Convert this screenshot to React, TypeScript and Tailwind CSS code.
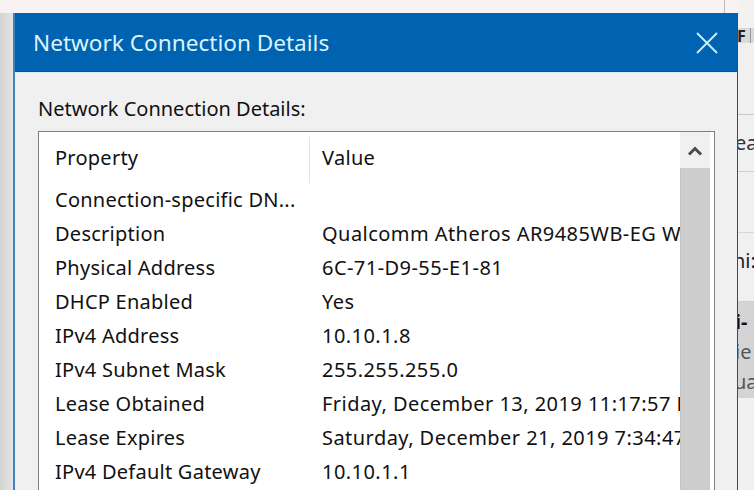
import React from "react";

const rows: [string, string][] = [
  ["Connection-specific DN...", ""],
  ["Description", "Qualcomm Atheros AR9485WB-EG Wireless Network Adapter"],
  ["Physical Address", "6C-71-D9-55-E1-81"],
  ["DHCP Enabled", "Yes"],
  ["IPv4 Address", "10.10.1.8"],
  ["IPv4 Subnet Mask", "255.255.255.0"],
  ["Lease Obtained", "Friday, December 13, 2019 11:17:57 PM"],
  ["Lease Expires", "Saturday, December 21, 2019 7:34:47 AM"],
  ["IPv4 Default Gateway", "10.10.1.1"],
];

export default function App() {
  return (
    <div
      className="w-[754px] h-[490px] overflow-hidden flex bg-[#f0f0f0] text-[#111]"
      style={{ fontFamily: '"Noto Sans", "Open Sans", sans-serif' }}
    >
      {/* left backdrop */}
      <div className="w-[13px] flex flex-col shrink-0">
        <div className="h-[13px] bg-[#f6f2f2]" />
        <div className="flex-1 bg-gradient-to-r from-[#d4d4d4] to-[#e4e4e4]" />
      </div>

      {/* dialog column */}
      <div className="w-[725px] flex flex-col shrink-0">
        <div className="h-[13px] bg-[#f7f3f3] flex justify-end pr-[13px]">
          <div className="w-px bg-[#bdbdbd]" />
        </div>
        <div className="flex-1 flex flex-col border-l-2 border-[#3f83c4] border-r border-r-[#24507a] min-h-0">
          {/* title bar */}
          <div className="h-[59px] bg-[#0063b1] flex items-center justify-between pl-[18px] pr-[19px] border-b border-[#144d80]">
            <span className="text-[22.6px] leading-none text-[#dcf3fb] pt-[2px]">Network Connection Details</span>
            <svg width="22" height="22" viewBox="0 0 22 22" className="mt-[1px]">
              <path d="M1 1 L21 21 M21 1 L1 21" stroke="#cdeefa" strokeWidth="1.8" fill="none" />
            </svg>
          </div>
          <div className="h-px bg-[#cfeef6]" />
          {/* body */}
          <div className="flex-1 flex flex-col pl-[23px] pr-[22px] bg-[#f0f0f0] min-h-0">
            <div className="pt-[24px] h-[48px] text-[20px] leading-[24px]">Network Connection Details:</div>
            <div className="mt-[10px] flex-1 bg-white border border-b-0 border-[#7f7f7f] flex min-h-0">
              {/* list */}
              <div className="flex-1 flex flex-col min-w-0 overflow-hidden">
                <div className="h-[51px] flex items-center shrink-0">
                  <div className="w-[270px] pl-[16px] text-[20px] tracking-[0.25px]">Property</div>
                  <div className="w-px h-[46px] self-end bg-[#e3e3e3]" />
                  <div className="pl-[12px] text-[20px] tracking-[0.3px]">Value</div>
                </div>
                {rows.map(([k, v]) => (
                  <div key={k} className="h-[34px] flex items-center shrink-0 text-[20px] whitespace-nowrap">
                    <div className="w-[270px] pl-[16px] overflow-hidden tracking-[0.25px]">{k}</div>
                    <div className="pl-[13px] flex-1 overflow-hidden tracking-[0.45px]">{v}</div>
                  </div>
                ))}
              </div>
              {/* scrollbar */}
              <div className="w-[30px] flex flex-col shrink-0">
                <div className="h-[36px] bg-[#f0f0f0] flex items-center justify-center shrink-0">
                  <svg width="16" height="12" viewBox="0 0 16 12" className="mt-[2px]">
                    <path d="M2 9.5 L8 3.5 L14 9.5" stroke="#4a4a4a" strokeWidth="3" fill="none" />
                  </svg>
                </div>
                <div className="flex-1 bg-[#cdcdcd] border-l border-[#c4c4c4]" />
              </div>
              <div className="w-[4px] shrink-0" />
            </div>
          </div>
        </div>
      </div>

      {/* window behind on the right */}
      <div className="flex-1 flex flex-col overflow-hidden text-[20px] leading-none">
        <div className="h-[28px] bg-[#f4f1f1]" />
        <div className="h-[15px] bg-[#dadada] flex items-center">
          <span className="text-[16px] font-bold text-[#222] ml-[-1px]">F</span>
          <div className="ml-auto mr-[3px] w-px h-full bg-[#9a9a9a]" />
        </div>
        <div className="h-[72px] bg-[#f0f0f0] border-b border-[#c9c9c9]" />
        <div className="h-[57px] bg-[#f0f0f0] border-b border-[#d0d0d0] flex items-center">
          <span className="ml-[-3px] text-[#333]">ea</span>
        </div>
        <div className="h-[61px] bg-[#f0f0f0] border-b border-[#d6d6d6]" />
        <div className="h-[69px] bg-[#f0f0f0] border-b border-[#cfcfcf] flex items-start pt-[18px]">
          <span className="ml-[-5px] text-[#222]">ni:</span>
        </div>
        <div className="h-[96px] bg-[#d4d4d4] flex flex-col pt-[10px] gap-[10px]">
          <span className="ml-[-3px] font-bold text-[#111]">i-</span>
          <span className="ml-[-3px] text-[#555]">ie</span>
          <span className="ml-[-4px] text-[#555]">ua</span>
        </div>
        <div className="flex-1 bg-[#f0f0f0]" />
      </div>
    </div>
  );
}
